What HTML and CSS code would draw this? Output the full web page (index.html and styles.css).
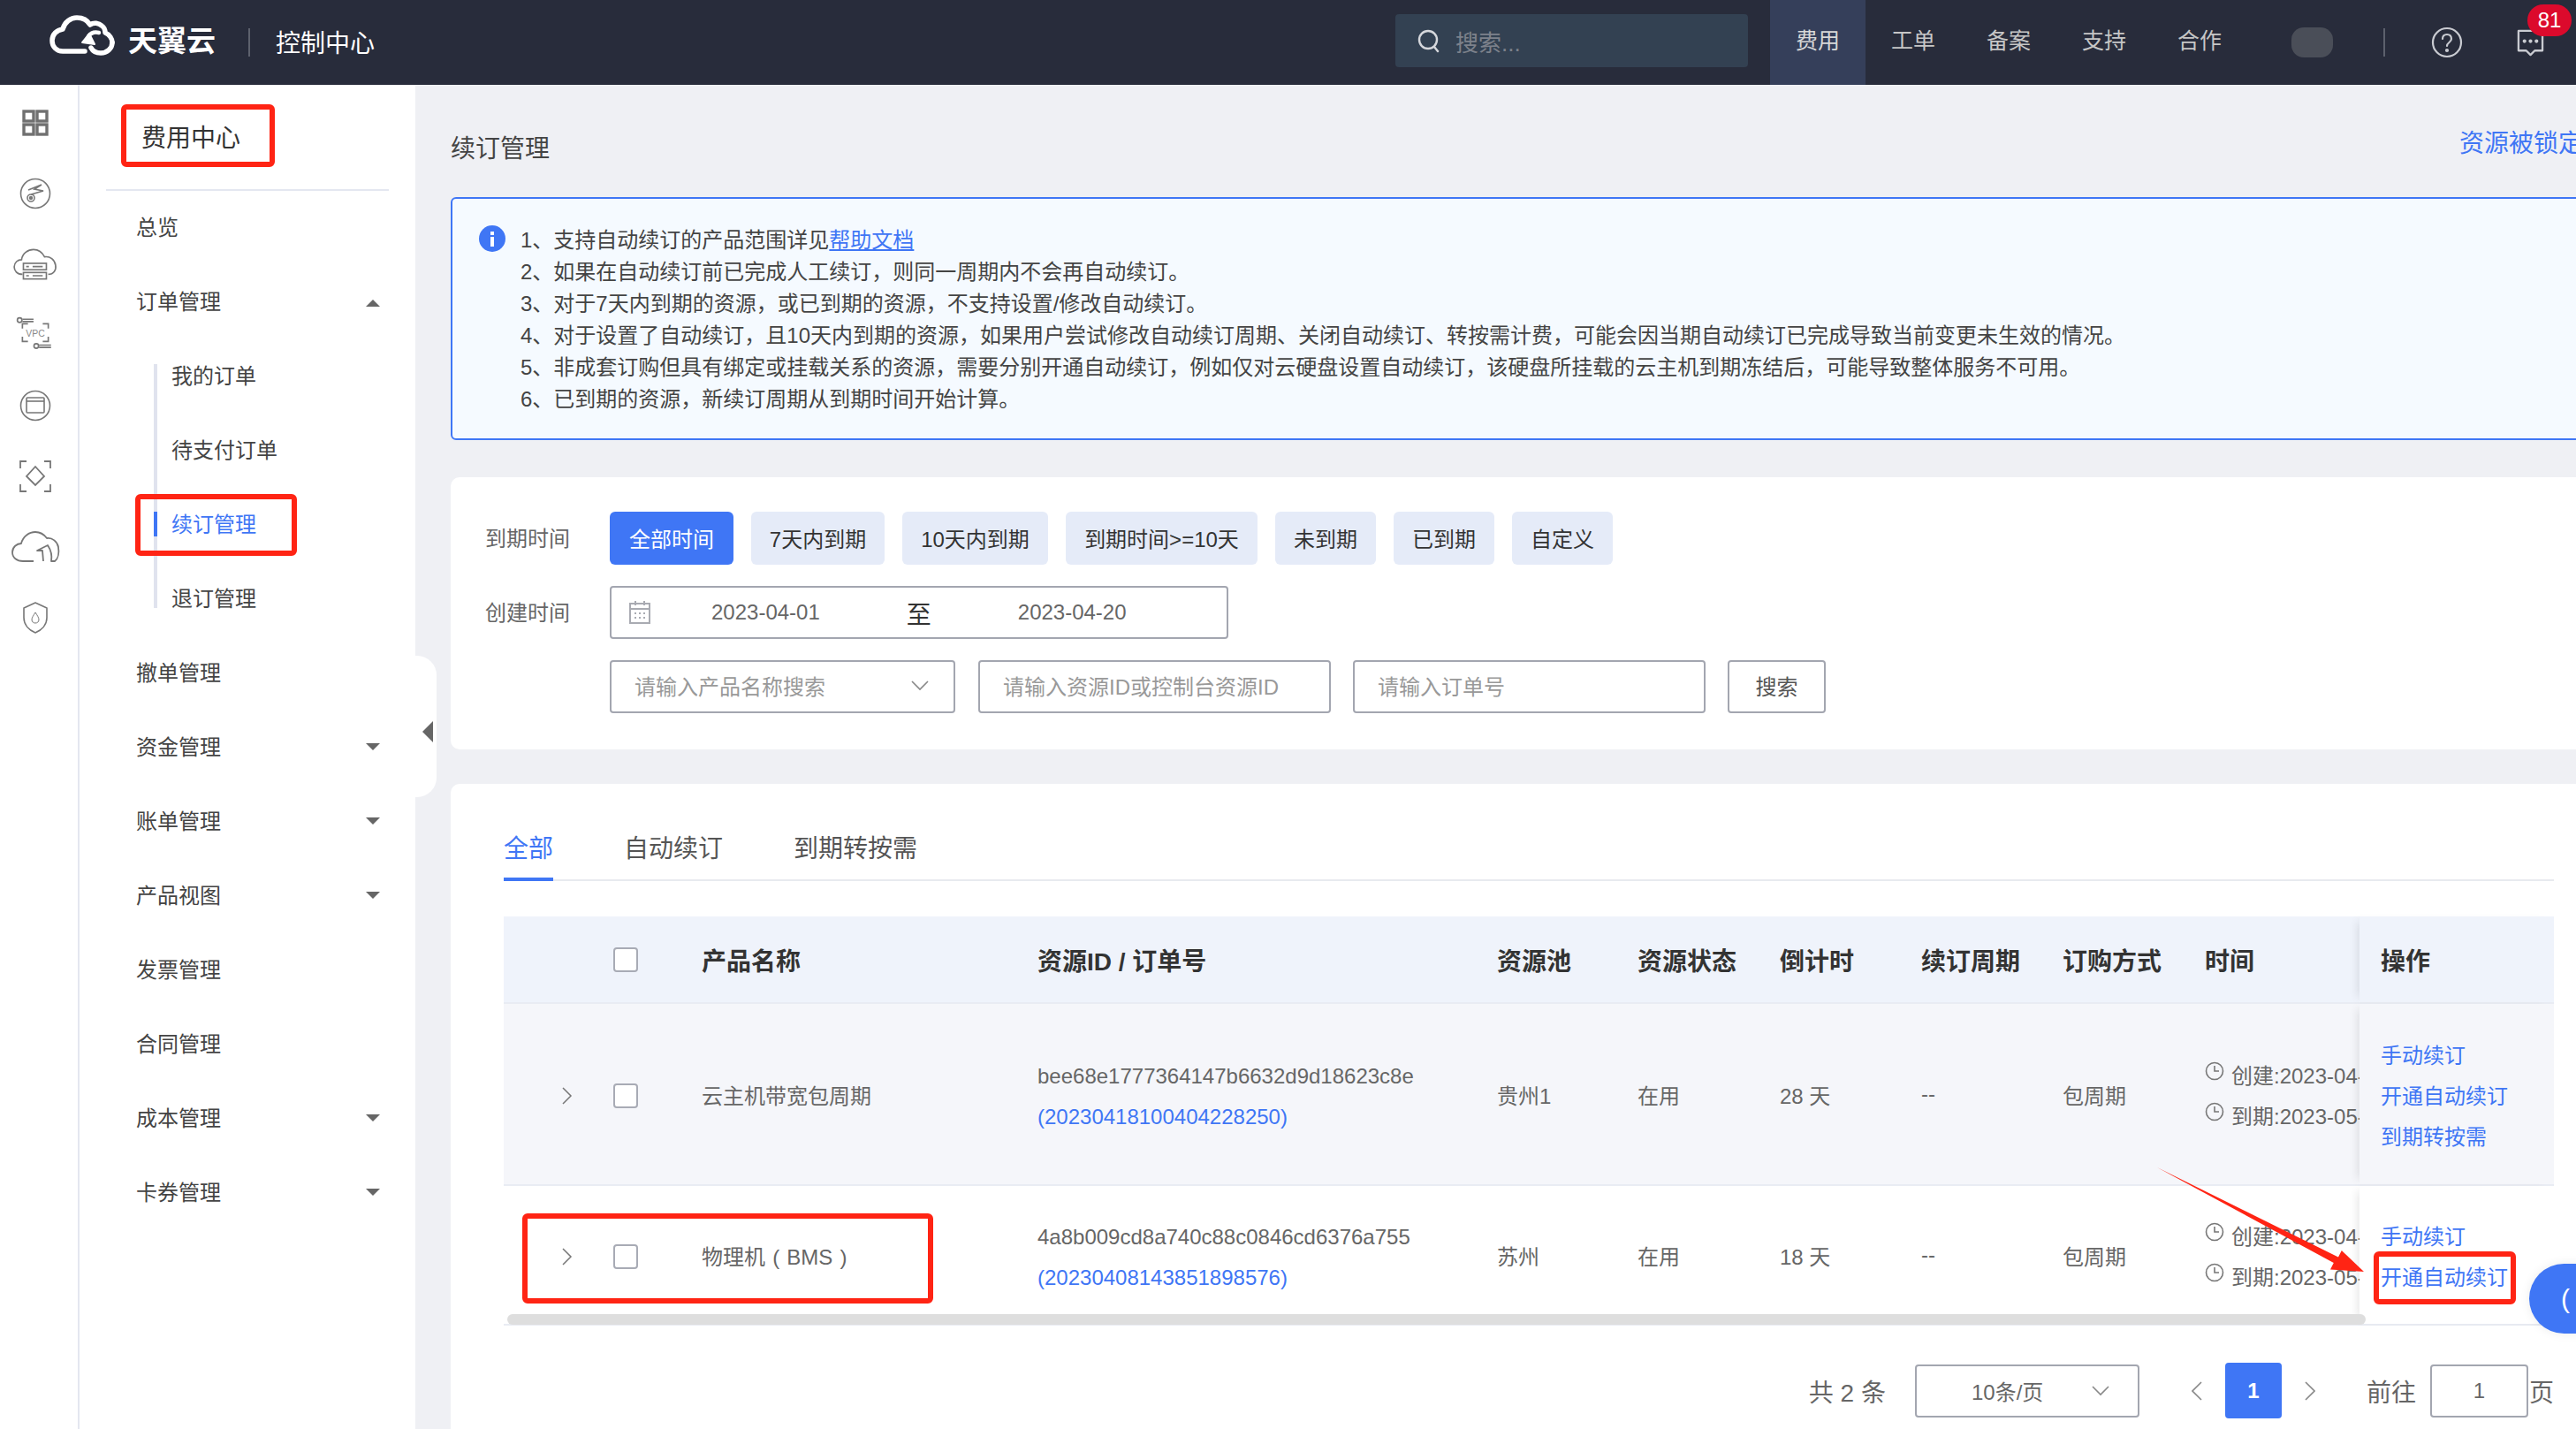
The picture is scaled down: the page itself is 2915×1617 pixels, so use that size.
FILE: index.html
```html
<!DOCTYPE html>
<html lang="zh-CN">
<head>
<meta charset="utf-8">
<title>续订管理</title>
<link rel="stylesheet" href="styles.css">
</head>
<body>
<div class="app">
  <header class="topbar">
    <svg class="logo" viewBox="0 0 74 46" fill="none" stroke="#fff" stroke-width="5.5" stroke-linecap="round" stroke-linejoin="round">
      <path d="M40 41H15C8 41 3 36 3 29C3 22 8 17 15 16C17 8 24 3 31 3C38 3 43 6 46 11C50 8 56 9 59 12C62 14 63 17 63 20C68 22 71 27 71 31"/>
      <path d="M71 31C71 38 65 43 58 43C53 43 49 41 47 37"/>
      <path d="M44 24C47 20 52 19 56 20" stroke-width="4.5"/>
      <path d="M37 31L45 21L51 33Z" fill="#fff" stroke-width="2"/>
    </svg>
    <span class="brand">天翼云</span>
    <span class="brand-sep"></span>
    <span class="console">控制中心</span>
    <div class="search">
      <svg class="search-ico" viewBox="0 0 28 28" fill="none" stroke="#d5d7dc" stroke-width="2.4" stroke-linecap="round"><circle cx="13" cy="13" r="10"/><path d="M20 21l4 5"/></svg>
      <span>搜索...</span>
    </div>
    <nav class="topnav">
      <a class="on">费用</a><a>工单</a><a>备案</a><a>支持</a><a>合作</a>
    </nav>
    <span class="blob"></span>
    <span class="top-sep"></span>
    <svg class="help" viewBox="0 0 36 36" fill="none" stroke="#c9cbd1" stroke-width="2.2" stroke-linecap="round"><circle cx="18" cy="18" r="16"/><path d="M13 14c0-3 2-5 5-5s5 2 5 5c0 4-5 4-5 8"/><circle cx="18" cy="27" r="1" fill="#c9cbd1"/></svg>
    <div class="msg">
      <svg viewBox="0 0 34 32" fill="none" stroke="#c9cbd1" stroke-width="2.4" stroke-linejoin="round"><path d="M3 2H31V25H22L17 30L12 25H3Z"/><circle cx="10" cy="14" r="1" fill="#c9cbd1"/><circle cx="17" cy="14" r="1" fill="#c9cbd1"/><circle cx="24" cy="14" r="1" fill="#c9cbd1"/></svg>
      <span class="badge">81</span>
    </div>
  </header>

  <div class="body">
    <aside class="rail">
      <svg viewBox="0 0 40 40" fill="none" stroke="#707070" stroke-width="3.4"><rect x="7" y="7" width="11" height="11"/><rect x="22" y="7" width="11" height="11"/><rect x="7" y="22" width="11" height="11"/><rect x="22" y="22" width="11" height="11"/></svg>
      <svg viewBox="0 0 40 40" fill="none" stroke="#777" stroke-width="1.6"><circle cx="20" cy="20" r="16.5"/><path d="M12 16L27 10L19 15L29 17L15 21" /><circle cx="15" cy="25" r="4"/><circle cx="15" cy="25" r="1.4" fill="#777"/></svg>
      <svg class="wide" viewBox="0 0 50 40" fill="none" stroke="#777" stroke-width="1.6"><path d="M11 31C5 31 2 27 2 23C2 18 6 15 10 15C11 8 17 4 23 4C29 4 33 8 35 12C41 11 46 15 47 21C48 26 45 31 39 31"/><rect x="12" y="19" width="25" height="7"/><rect x="12" y="29" width="25" height="7"/><path d="M22 22.500H33M22 32.500H33M15 22.500H18M15 32.500H18"/></svg>
      <svg class="mid" viewBox="0 0 44 40" fill="none" stroke="#777" stroke-width="1.6"><circle cx="5" cy="4" r="2.500"/><path d="M8 3H20M8 5.500H20M26 31H39M26 33.500H39"/><circle cx="23" cy="32" r="2.500"/><path d="M8 13V8H14M30 8H36V13M8 22V27H14M30 27H36V22"/><text class="vpc" x="22" y="22" text-anchor="middle">VPC</text></svg>
      <svg viewBox="0 0 40 40" fill="none" stroke="#777" stroke-width="1.6"><circle cx="20" cy="20" r="16.5"/><rect x="10" y="11" width="20" height="17" rx="1"/><path d="M10 15H30"/></svg>
      <svg viewBox="0 0 40 40" fill="none" stroke="#777" stroke-width="1.8"><path d="M3 11V3H10M30 3H37V11M3 29V37H10M30 37H37V29"/><path d="M20 9L30 20L20 30L10 20Z"/></svg>
      <svg class="wider" viewBox="0 0 56 40" fill="none" stroke="#777" stroke-width="1.8" stroke-linejoin="round"><path d="M26 36H14C7 36 2 32 2 26C2 20 7 16 12 16C14 8 21 3 28 3C34 3 38 6 41 10C47 9 53 14 54 20C55 26 54 33 50 36H46C47 30 46 24 42 18L30 24H36L37 36"/></svg>
      <svg viewBox="0 0 40 40" fill="none" stroke="#777" stroke-width="1.6" stroke-linejoin="round"><path d="M20 3L33 9V20C33 28 27 34 20 37C13 34 7 28 7 20V9Z"/><path d="M20 14C18 17 16 20 16 22C16 25 18 26 20 26C22 26 24 25 24 22C24 20 22 17 20 14Z" stroke-width="1"/></svg>
    </aside>

    <aside class="side">
      <h2 class="side-title">费用中心</h2>
      <div class="side-rule"></div>
      <a class="m">总览</a>
      <a class="m">订单管理<i class="tri up"></i></a>
      <div class="sub">
        <a class="m">我的订单</a>
        <a class="m">待支付订单</a>
        <a class="m on">续订管理</a>
        <a class="m">退订管理</a>
      </div>
      <a class="m">撤单管理</a>
      <a class="m">资金管理<i class="tri"></i></a>
      <a class="m">账单管理<i class="tri"></i></a>
      <a class="m">产品视图<i class="tri"></i></a>
      <a class="m">发票管理</a>
      <a class="m">合同管理</a>
      <a class="m">成本管理<i class="tri"></i></a>
      <a class="m">卡券管理<i class="tri"></i></a>
    </aside>

    <main class="main">
      <div class="page">
        <div class="title-row">
          <h1>续订管理</h1>
          <a class="lock-link">资源被锁定</a>
        </div>

        <section class="alert">
          <svg class="info" viewBox="0 0 30 30"><circle cx="15" cy="15" r="15" fill="#3f76f5"/><rect x="13" y="13" width="4" height="11" fill="#fff"/><rect x="13" y="7" width="4" height="4" fill="#fff"/></svg>
          <div class="alert-text">
            <p>1、支持自动续订的产品范围详见<a>帮助文档</a></p>
            <p>2、如果在自动续订前已完成人工续订<i class="cm">，</i>则同一周期内不会再自动续订。</p>
            <p>3、对于7天内到期的资源<i class="cm">，</i>或已到期的资源<i class="cm">，</i>不支持设置/修改自动续订。</p>
            <p>4、对于设置了自动续订<i class="cm">，</i>且10天内到期的资源<i class="cm">，</i>如果用户尝试修改自动续订周期、关闭自动续订、转按需计费<i class="cm">，</i>可能会因当期自动续订已完成导致当前变更未生效的情况。</p>
            <p>5、非成套订购但具有绑定或挂载关系的资源<i class="cm">，</i>需要分别开通自动续订<i class="cm">，</i>例如仅对云硬盘设置自动续订<i class="cm">，</i>该硬盘所挂载的云主机到期冻结后<i class="cm">，</i>可能导致整体服务不可用。</p>
            <p>6、已到期的资源<i class="cm">，</i>新续订周期从到期时间开始计算。</p>
          </div>
        </section>

        <section class="filters">
          <div class="f-row">
            <label>到期时间</label>
            <div class="chips">
              <button class="chip on w140">全部时间</button>
              <button class="chip w151">7天内到期</button>
              <button class="chip w165">10天内到期</button>
              <button class="chip w217">到期时间&gt;=10天</button>
              <button class="chip w114">未到期</button>
              <button class="chip w114">已到期</button>
              <button class="chip w114">自定义</button>
            </div>
          </div>
          <div class="f-row">
            <label>创建时间</label>
            <div class="range">
              <svg class="cal" viewBox="0 0 24 26" fill="none" stroke="#a9abb2" stroke-width="2"><rect x="1" y="3" width="22" height="22"/><path d="M1 9H23M7 0V5M17 0V5"/><path d="M6 14H8M11 14H13M16 14H18M6 19H8M11 19H13M16 19H18"/></svg>
              <span class="d1">2023-04-01</span>
              <span class="to">至</span>
              <span class="d2">2023-04-20</span>
            </div>
          </div>
          <div class="f-row">
            <label></label>
            <div class="field w391">请输入产品名称搜索
              <svg class="chev" viewBox="0 0 20 12" fill="none" stroke="#888" stroke-width="1.6"><path d="M1 1L10 10L19 1"/></svg>
            </div>
            <div class="field w399 ml26">请输入资源ID或控制台资源ID</div>
            <div class="field w399 ml25">请输入订单号</div>
            <button class="go">搜索</button>
          </div>
        </section>

        <section class="card">
          <div class="tabs">
            <a class="on">全部</a><a>自动续订</a><a>到期转按需</a>
          </div>
          <div class="table">
            <div class="tr th">
              <div></div>
              <div class="c-box"><span class="box"></span></div>
              <div>产品名称</div>
              <div>资源ID / 订单号</div>
              <div>资源池</div>
              <div>资源状态</div>
              <div>倒计时</div>
              <div>续订周期</div>
              <div>订购方式</div>
              <div>时间</div>
              <div class="fix">操作</div>
            </div>
            <div class="tr r1">
              <div class="c-exp"><svg class="exp" viewBox="0 0 12 20" fill="none" stroke="#777" stroke-width="1.5"><path d="M1 1L10 10L1 19"/></svg></div>
              <div class="c-box"><span class="box"></span></div>
              <div>云主机带宽包周期</div>
              <div class="stack"><span>bee68e1777364147b6632d9d18623c8e</span><a>(20230418100404228250)</a></div>
              <div>贵州1</div>
              <div>在用</div>
              <div>28 天</div>
              <div>--</div>
              <div>包周期</div>
              <div class="stack clip">
                <span><svg class="clock" viewBox="0 0 22 22" fill="none" stroke="#777" stroke-width="1.6"><circle cx="11" cy="11" r="9.500"/><path d="M11 5V11H16"/></svg>创建:2023-04-18</span>
                <span><svg class="clock" viewBox="0 0 22 22" fill="none" stroke="#777" stroke-width="1.6"><circle cx="11" cy="11" r="9.500"/><path d="M11 5V11H16"/></svg>到期:2023-05-18</span>
              </div>
              <div class="fix stack"><a>手动续订</a><a>开通自动续订</a><a>到期转按需</a></div>
            </div>
            <div class="tr r2">
              <div class="c-exp"><svg class="exp" viewBox="0 0 12 20" fill="none" stroke="#777" stroke-width="1.5"><path d="M1 1L10 10L1 19"/></svg></div>
              <div class="c-box"><span class="box"></span></div>
              <div class="bms">物理机 ( BMS )</div>
              <div class="stack"><span>4a8b009cd8a740c88c0846cd6376a755</span><a>(20230408143851898576)</a></div>
              <div>苏州</div>
              <div>在用</div>
              <div>18 天</div>
              <div>--</div>
              <div>包周期</div>
              <div class="stack clip">
                <span><svg class="clock" viewBox="0 0 22 22" fill="none" stroke="#777" stroke-width="1.6"><circle cx="11" cy="11" r="9.500"/><path d="M11 5V11H16"/></svg>创建:2023-04-08</span>
                <span><svg class="clock" viewBox="0 0 22 22" fill="none" stroke="#777" stroke-width="1.6"><circle cx="11" cy="11" r="9.500"/><path d="M11 5V11H16"/></svg>到期:2023-05-08</span>
              </div>
              <div class="fix stack"><a>手动续订</a><a>开通自动续订</a></div>
            </div>
            <div class="hscroll"></div>
          </div>
          <div class="pager">
            <span class="total">共 2 条</span>
            <div class="size">10条/页
              <svg class="chev" viewBox="0 0 20 12" fill="none" stroke="#888" stroke-width="1.6"><path d="M1 1L10 10L19 1"/></svg>
            </div>
            <span class="pg"><svg viewBox="0 0 12 22" fill="none" stroke="#888" stroke-width="1.6"><path d="M11 1L1 11L11 21"/></svg></span>
            <span class="cur">1</span>
            <span class="pg"><svg viewBox="0 0 12 22" fill="none" stroke="#888" stroke-width="1.6"><path d="M1 1L11 11L1 21"/></svg></span>
            <span class="goto">前往</span>
            <span class="pinput">1</span>
            <span class="unit">页</span>
          </div>
        </section>
      </div>
    </main>
  </div>

  <div class="collapse"><i></i></div>
  <div class="float">(</div>

  <div class="mark mk-title"></div>
  <div class="mark mk-renew"></div>
  <div class="mark mk-row"></div>
  <div class="mark mk-op"></div>
  <svg class="arrow" viewBox="0 0 240 125"><polygon fill="#ff2414" points="1,1 206,102.500 209.800,95 235,119 197,116.500 200.800,109"/></svg>
</div>
</body>
</html>
```

FILE: styles.css
```css
* { box-sizing: border-box; }
html, body { margin: 0; padding: 0; }
body { font-family: "Liberation Sans", "Noto Sans CJK SC", sans-serif; font-size: 24px; color: #666; background: #eff0f4; }
a { cursor: pointer; }
button { font: inherit; }
i { font-style: normal; }
h1, h2, p { margin: 0; font-weight: 400; }

.app { position: relative; width: 2915px; height: 1617px; overflow: hidden; }

/* top bar */
.topbar { height: 96px; background: #282c3b; display: flex; align-items: center; padding: 0 35px 0 56px; color: #ccc; }
.logo { width: 74px; height: 46px; margin-top: -17px; flex: none; }
.brand { margin-left: 15px; width: 100px; font-size: 33px; font-weight: 700; color: #fff; white-space: nowrap; margin-top: -8px; }
.brand-sep { width: 2px; height: 32px; margin-left: 36px; background: #5d616d; }
.console { margin-left: 29px; font-size: 28px; color: #fff; margin-top: -2px; }
.search { margin-left: auto; width: 399px; height: 60px; margin-top: -4px; background: #334152; border-radius: 4px; display: flex; align-items: center; padding-left: 24px; color: #7d818b; font-size: 26px; }
.search-ico { width: 28px; height: 28px; margin-right: 16px; }
.topnav { display: flex; margin-left: 25px; }
.topnav a { width: 108px; height: 96px; line-height: 92px; text-align: center; font-size: 25px; color: #c6c6c6; }
.topnav a.on { background: #353f5a; color: #d8d8d8; }
.blob { width: 47px; height: 34px; margin-left: 50px; background: #4a4e58; border-radius: 14px; }
.top-sep { width: 2px; height: 32px; margin-left: 57px; background: #5d616d; }
.help { width: 36px; height: 36px; margin-left: 52px; }
.msg { position: relative; width: 33px; height: 31px; margin-left: 60px; }
.msg svg { width: 33px; height: 31px; display: block; }
.badge { position: absolute; left: 13px; top: -28px; width: 50px; height: 36px; border-radius: 18px; background: #dc0a2c; color: #fff; font-size: 24px; line-height: 36px; text-align: center; }

/* layout */
.body { display: flex; height: 1521px; }

.rail { width: 90px; flex: none; background: #fff; border-right: 2px solid #e4e7f0; display: flex; flex-direction: column; align-items: center; padding-top: 21px; }
.rail svg { width: 40px; height: 44px; margin-bottom: 36px; margin-right: 8px; flex: none; }
.rail svg.mid { width: 46px; }
.rail svg.wide { width: 52px; }
.rail svg.wider { width: 56px; }
.vpc { font-size: 10px; fill: #888; stroke: none; font-family: "Liberation Sans", sans-serif; }

.side { width: 380px; flex: none; background: #fff; padding-left: 30px; }
.side-title { height: 118px; line-height: 122px; padding-left: 40px; font-size: 28px; color: #333; }
.side-rule { height: 2px; width: 320px; background: #e4e7f0; margin-bottom: -3px; }
.m { display: flex; align-items: center; height: 84px; padding-left: 34px; padding-right: 40px; justify-content: space-between; color: #444; }
.tri { width: 0; height: 0; border-left: 8px solid transparent; border-right: 8px solid transparent; border-top: 8px solid #666; margin-top: 4px; }
.tri.up { border-top: 0; border-bottom: 8px solid #666; margin-top: 8px; }
.sub { position: relative; margin-left: 54px; }
.sub::before { content: ""; position: absolute; left: 0; top: 31px; bottom: 29px; width: 4px; background: #e0e3ee; }
.sub .m { padding-left: 20px; position: relative; }
.sub .m.on { color: #3f76f5; }
.sub .m.on::before { content: ""; position: absolute; left: 0; top: 30px; width: 4px; height: 28px; background: #3f76f5; }

.main { flex: 1; overflow: hidden; padding: 48px 0 0 40px; background: #eff0f4; }
.page { width: 2420px; }
.title-row { height: 44px; display: flex; justify-content: space-between; align-items: center; padding-right: 7px; }
h1 { font-size: 28px; color: #444; }
.lock-link { font-size: 28px; color: #3f76f5; margin-top: -12px; }

.alert { margin-top: 35px; height: 275px; background: #f5faff; border: 2px solid #3f76f5; border-radius: 6px; padding: 29px 0 0 30px; display: flex; color: #444; }
.info { width: 30px; height: 30px; margin-top: 1px; flex: none; }
.alert-text { margin-left: 17px; }
.alert-text p { line-height: 36px; white-space: nowrap; }
.alert-text a { color: #3f76f5; text-decoration: underline; }
.cm { font-family: "Liberation Sans", "Noto Sans CJK TC", sans-serif; }

.filters { margin-top: 42px; height: 308px; background: #fff; border-radius: 10px; padding: 39px 0 0 39px; display: flex; flex-direction: column; gap: 24px; }
.f-row { display: flex; align-items: center; height: 60px; }
.f-row label { width: 141px; flex: none; color: #666; padding-bottom: 4px; }
.chips { display: flex; gap: 20px; }
.chip { height: 60px; border: 0; border-radius: 6px; background: #e5ebf8; color: #333; padding: 0 0 2px; }
.chip.on { background: #3f76f5; color: #fff; }
.w140 { width: 140px; } .w151 { width: 151px; } .w165 { width: 165px; } .w217 { width: 217px; } .w114 { width: 114px; }
.range { position: relative; width: 700px; height: 60px; border: 2px solid #a3a6b0; border-radius: 4px; display: flex; align-items: center; color: #666; }
.cal { width: 24px; height: 26px; margin-left: 20px; flex: none; }
.d1 { margin-left: 69px; }
.to { margin-left: 98px; font-size: 28px; color: #333; padding-top: 2px; }
.d2 { margin-left: 98px; }
.field { position: relative; height: 60px; border: 2px solid #a3a6b0; border-radius: 4px; display: flex; align-items: center; padding: 0 0 3px 26px; color: #999; }
.w391 { width: 391px; justify-content: space-between; padding-right: 28px; } .w399 { width: 399px; }
.ml26 { margin-left: 26px; } .ml25 { margin-left: 25px; }
.chev { width: 20px; height: 12px; flex: none; }
.go { margin-left: 25px; width: 111px; height: 60px; border: 2px solid #a3a6b0; border-radius: 4px; background: #fff; color: #555; padding: 0 0 3px; }

.card { margin-top: 39px; height: 760px; background: #fff; border-radius: 10px 10px 0 0; padding: 36px 40px 0 60px; }
.tabs { display: flex; gap: 80px; border-bottom: 2px solid #e8eaef; height: 74px; }
.tabs a { height: 74px; line-height: 75px; font-size: 28px; color: #555; white-space: nowrap; }
.tabs a.on { color: #3f76f5; border-bottom: 4px solid #3f76f5; }

.table { position: relative; margin-top: 40px; width: 2320px; }
.tr { display: grid; grid-template-columns: 124px 100px 380px 520px 159px 161px 160px 160px 161px 175px 220px; align-items: center; border-bottom: 2px solid #e9ecf3; }
.tr > div { height: 100%; display: flex; align-items: center; white-space: nowrap; }
.th { height: 99px; background: #eff3fb; font-size: 28px; font-weight: 700; color: #333; }
.r1 { height: 206px; background: #f5f6fa; }
.r2 { height: 158px; background: #fff; }
.bms { word-spacing: 1.5px; }
.box { width: 28px; height: 28px; border: 2px solid #a8abb5; border-radius: 4px; background: #fff; display: block; }
.r1 .c-box, .r2 .c-box, .c-exp { padding-top: 3px; }
.c-exp { padding-left: 66px; }
.exp { width: 12px; height: 20px; }
.tr > .stack { flex-direction: column; align-items: flex-start; justify-content: center; padding-top: 5px; }
.stack > * { line-height: 46px; height: 46px; display: flex; align-items: center; }
.stack > a { color: #3f76f5; }
.clip { overflow: hidden; }
.clock { width: 22px; height: 22px; margin-right: 8px; margin-top: -12px; flex: none; }
.tr > .fix { position: relative; z-index: 1; padding-left: 24px; box-shadow: -8px 0 10px -6px rgba(0, 0, 0, .1); }
.th > .fix { background: #eff3fb; }
.r1 > .fix { background: #f5f6fa; }
.r2 > .fix { background: #fff; }
.hscroll { position: absolute; z-index: 2; left: 4px; top: 450px; width: 2103px; height: 12px; background: #dedede; border-radius: 6px; }

.pager { margin-top: 42px; height: 63px; display: flex; align-items: center; justify-content: flex-end; color: #666; }
.total { font-size: 28px; white-space: pre; }
.size { margin-left: 33px; width: 254px; height: 60px; border: 2px solid #a3a6b0; border-radius: 4px; display: flex; align-items: center; justify-content: space-between; padding: 0 32px 0 62px; }
.pg { width: 64px; height: 63px; display: flex; align-items: center; justify-content: center; }
.pg svg { width: 12px; height: 22px; }
.size + .pg { margin-left: 33px; }
.cur { width: 64px; height: 63px; background: #3f76f5; color: #fff; font-weight: 700; line-height: 63px; text-align: center; border-radius: 4px; }
.goto { margin-left: 32px; font-size: 28px; }
.pinput { margin-left: 16px; width: 111px; height: 60px; border: 2px solid #a3a6b0; border-radius: 4px; line-height: 56px; text-align: center; }
.unit { margin-left: 1px; font-size: 28px; }

/* overlays */
.collapse { position: absolute; left: 470px; top: 742px; width: 24px; height: 160px; background: #fff; border-radius: 0 22px 22px 0; display: flex; align-items: center; }
.collapse i { width: 0; height: 0; margin-left: 8px; border-top: 12px solid transparent; border-bottom: 12px solid transparent; border-right: 12px solid #666; margin-top: 12px; }
.float { position: absolute; left: 2862px; top: 1430px; width: 90px; height: 79px; border-radius: 40px; background: #3f76f5; color: #fff; font-size: 30px; line-height: 79px; padding-left: 36px; box-shadow: 0 0 12px rgba(0, 0, 0, .08); z-index: 3; }
.mark { position: absolute; z-index: 4; border: 6px solid #ff2414; border-radius: 6px; pointer-events: none; }
.mk-title { left: 137px; top: 118px; width: 174px; height: 71px; }
.mk-renew { left: 153px; top: 559px; width: 183px; height: 70px; }
.mk-row { left: 591px; top: 1373px; width: 465px; height: 102px; }
.mk-op { left: 2686px; top: 1416px; width: 161px; height: 60px; }
.arrow { position: absolute; left: 2445px; top: 1320px; width: 240px; height: 125px; z-index: 4; margin-left: -5px; }
```
